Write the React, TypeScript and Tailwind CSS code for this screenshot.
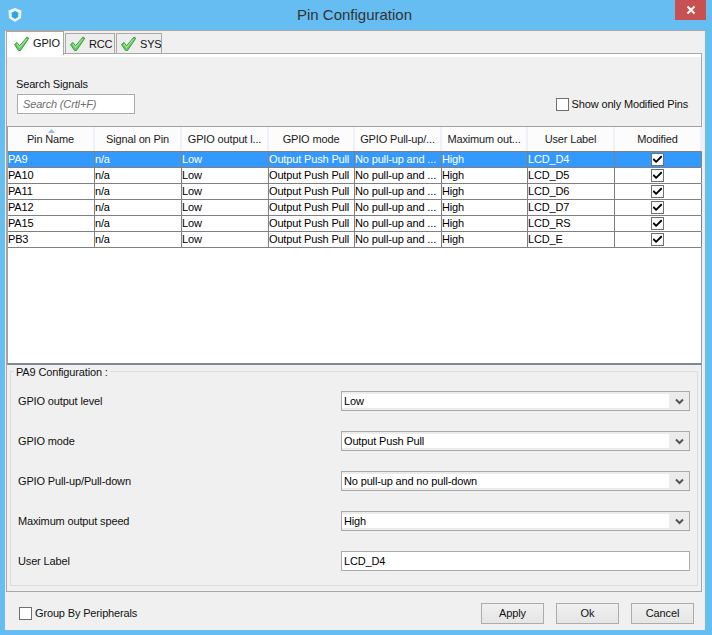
import { Check } from "lucide-react";

const font = "font-['Liberation_Sans',sans-serif]";

const columns = [
  "Pin Name",
  "Signal on Pin",
  "GPIO output l...",
  "GPIO mode",
  "GPIO Pull-up/...",
  "Maximum out...",
  "User Label",
  "Modified",
];

const rows = [
  { pin: "PA9", label: "LCD_D4" },
  { pin: "PA10", label: "LCD_D5" },
  { pin: "PA11", label: "LCD_D6" },
  { pin: "PA12", label: "LCD_D7" },
  { pin: "PA15", label: "LCD_RS" },
  { pin: "PB3", label: "LCD_E" },
];

const fields = [
  { label: "GPIO output level", value: "Low" },
  { label: "GPIO mode", value: "Output Push Pull" },
  { label: "GPIO Pull-up/Pull-down", value: "No pull-up and no pull-down" },
  { label: "Maximum output speed", value: "High" },
];

function TabCheck() {
  return (
    <svg width="17" height="16" viewBox="0 0 17 16" className="shrink-0">
      <path
        d="M1.5 8.5 L4 6.5 L6.5 10 L14 1 L15.8 2.2 L7.5 14.5 L5.5 14.5 Z"
        fill="#63cf5f"
        stroke="#3f9a45"
        strokeWidth="1"
        strokeLinejoin="round"
      />
      <path d="M4 8 L6.5 11.5 L13.5 3" fill="none" stroke="#b5efb0" strokeWidth="1" />
    </svg>
  );
}

function Tab({ name, active, width }: { name: string; active?: boolean; width: string }) {
  return (
    <div
      className={`flex items-center gap-[3px] border border-[#a8a8a8] pl-[3px] ${width} ${
        active
          ? "h-[24px] bg-white border-b-0 relative z-10 pl-[6px]"
          : "h-[21px] mt-[2px] bg-[#ededed] border-b-0"
      }`}
    >
      <TabCheck />
      <span>{name}</span>
    </div>
  );
}

function Box({ checked }: { checked?: boolean }) {
  return (
    <div className="w-[13px] h-[13px] bg-white border border-[#6f6f6f] flex items-center justify-center shrink-0">
      {checked && <Check size={11} strokeWidth={4} color="#000" />}
    </div>
  );
}

function Row({ pin, label, selected }: { pin: string; label: string; selected?: boolean }) {
  const cells = ["n/a", "Low", "Output Push Pull", "No pull-up and ...", "High", label];
  const cellClass = "border-r border-[#808080] overflow-hidden whitespace-nowrap";
  return (
    <div
      className={`grid grid-cols-[87px_87px_87px_86px_87px_86px_87px_87px] h-[16px] leading-[14px] border-b border-[#808080] ${
        selected ? "bg-[#3399ff] text-white" : "bg-white text-black"
      }`}
    >
      <div className={cellClass}>{pin}</div>
      {cells.map((c, i) => (
        <div key={i} className={cellClass}>
          {c}
        </div>
      ))}
      <div className="border-r border-[#808080] flex items-center justify-center pr-[2px]">
        <Box checked />
      </div>
    </div>
  );
}

function Select({ value }: { value: string }) {
  return (
    <div className="w-[349px] h-[20px] border border-[#ababab] bg-[#ececec] flex py-[2px]">
      <div className="w-[327px] bg-white pl-[2px] leading-[14px] text-black">{value}</div>
      <div className="flex-1 flex items-center justify-center pt-px">
        <svg width="9" height="7" viewBox="0 0 9 7">
          <path d="M1 1.5 L4.5 5 L8 1.5" fill="none" stroke="#555" strokeWidth="2" />
        </svg>
      </div>
    </div>
  );
}

function Button({ text }: { text: string }) {
  return (
    <div className="w-[63px] h-[21px] border border-[#acacac] bg-gradient-to-b from-[#f0f0f0] to-[#e5e5e5] flex items-center justify-center">
      {text}
    </div>
  );
}

export default function App() {
  return (
    <div className={`${font} w-[712px] h-[635px] bg-[#65bdf2] text-[11px] tracking-[-0.15px] text-[#111] flex flex-col overflow-hidden`}>
      {/* Title bar */}
      <div className="h-[30px] shrink-0 flex items-start relative">
        <svg width="16" height="16" viewBox="0 0 16 16" className="ml-[7px] mt-[7px] shrink-0">
          <path d="M8 1 L14.5 3.5 L14 11 L8 15 L2 11 L1.5 3.5 Z" fill="#e8f6fd" />
          <path d="M8 4 L11.5 5.8 L11 10 L8 12 L5 10 L4.5 5.8 Z" fill="#2fa4dc" />
        </svg>
        <div className="flex-1 text-center text-[15px] tracking-normal leading-[30px] text-[#333] pl-[11px]">Pin Configuration</div>
        <div className="w-[31px] h-[20px] bg-[#c75050] flex items-center justify-center mr-[6px] shrink-0">
          <svg width="10" height="10" viewBox="0 0 10 10">
            <path d="M1.5 1.5 L8.5 8.5 M8.5 1.5 L1.5 8.5" stroke="#fff" strokeWidth="2" />
          </svg>
        </div>
      </div>

      {/* Client area */}
      <div className="mx-[5px] w-[700px] h-[600px] bg-[#f0f0f0] border-t border-[#a8a8a8] flex flex-col pl-px pr-[3px]">
        <div className="flex gap-px h-[22px] shrink-0">
          <Tab name="GPIO" active width="w-[58px]" />
          <Tab name="RCC" width="w-[50px]" />
          <Tab name="SYS" width="w-[46px]" />
        </div>

        {/* Tab panel */}
        <div className="h-[539px] border border-[#a8a8a8] flex flex-col relative">
          <div className="h-[72px] shrink-0 flex justify-between pl-[10px] pr-[13px] border-t-[3px] border-white">
            <div className="pt-[19px]">
              <div className="leading-[16px] -ml-px">Search Signals</div>
              <div className="mt-[2px] w-[118px] h-[20px] border border-[#ababab] bg-white pl-[5px] leading-[18px] italic text-[#6d6d6d]">
                Search (Crtl+F)
              </div>
            </div>
            <div className="flex items-center gap-[3px] pt-[25px]">
              <Box />
              <span>Show only Modified Pins</span>
            </div>
          </div>

          {/* Signal table */}
          <div className="w-[695px] h-[239px] border border-[#a0a0a0] border-b-2 border-b-[#808890] bg-white flex flex-col shrink-0">
            <div className="grid grid-cols-[87px_87px_87px_86px_87px_86px_87px_87px] h-[25px] bg-[#fcfcfc] border-b border-[#808080] shrink-0">
              {columns.map((c, i) => (
                <div key={c} className="relative border-r-2 border-[#eef2f8] flex items-center justify-center whitespace-nowrap text-[#1a1a1a]">
                  {i === 0 && (
                    <svg width="7" height="4" viewBox="0 0 7 4" className="absolute top-[2px] left-[40px]">
                      <path d="M3.5 0 L7 4 L0 4 Z" fill="#9dbcd8" />
                    </svg>
                  )}
                  {c}
                </div>
              ))}
            </div>
            {rows.map((r, i) => (
              <Row key={r.pin} pin={r.pin} label={r.label} selected={i === 0} />
            ))}
          </div>

          {/* Pin details */}
          <div className="mt-[6px] ml-[3px] w-[688px] h-[215px] border border-[#dcdcdc] relative flex flex-col pl-[7px] pt-[19px] gap-[20px]">
            <div className="absolute -top-[7px] left-[3px] bg-[#f0f0f0] px-[2px] leading-[15px]">PA9 Configuration :</div>
            {fields.map((f) => (
              <div key={f.label} className="flex items-center justify-between pr-[7px] h-[20px]">
                <span>{f.label}</span>
                <Select value={f.value} />
              </div>
            ))}
            <div className="flex items-center justify-between pr-[7px] h-[20px]">
              <span>User Label</span>
              <div className="w-[349px] h-[20px] border border-[#ababab] bg-white pl-[2px] leading-[18px] text-black">LCD_D4</div>
            </div>
          </div>
        </div>

        {/* Footer */}
        <div className="flex-1 flex items-center justify-between pl-[13px] pr-[8px] pt-[4px]">
          <div className="flex items-center gap-[3px]">
            <Box />
            <span>Group By Peripherals</span>
          </div>
          <div className="flex gap-[12px]">
            <Button text="Apply" />
            <Button text="Ok" />
            <Button text="Cancel" />
          </div>
        </div>
      </div>
    </div>
  );
}
